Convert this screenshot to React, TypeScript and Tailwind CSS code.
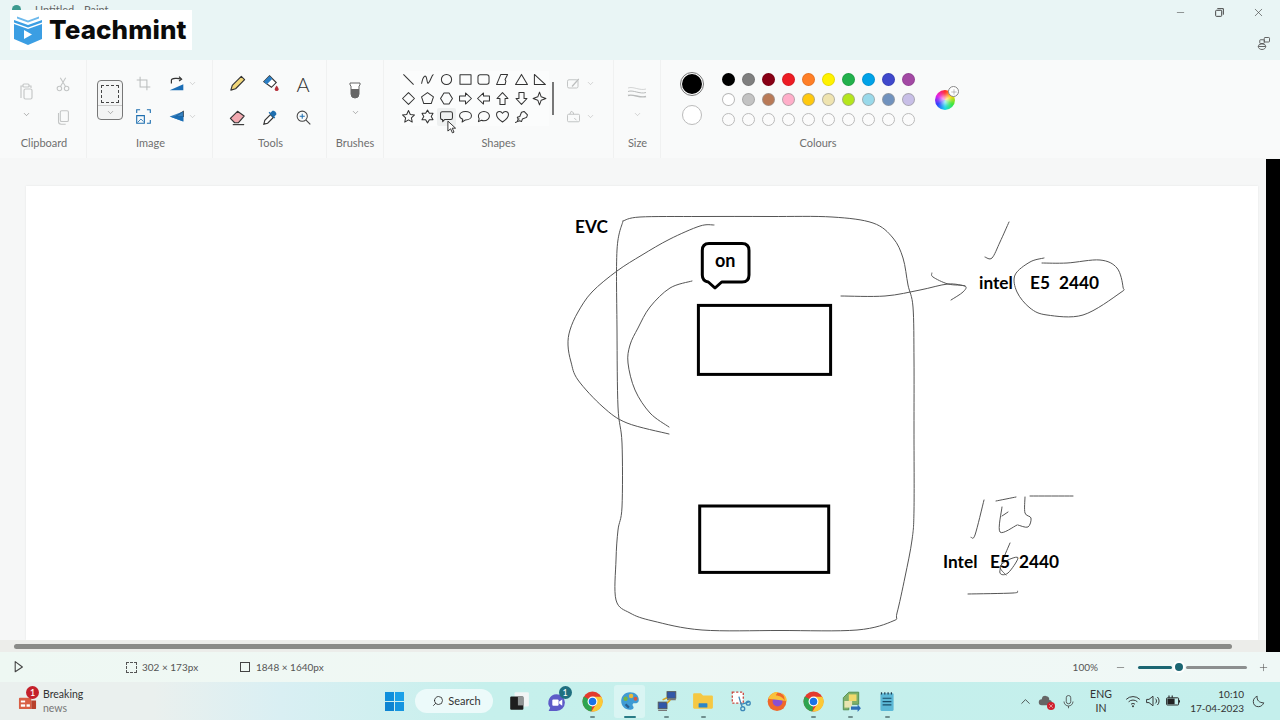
import { ChevronDown, ChevronUp, Minus, Plus, Search, X } from 'lucide-react';
import type { ReactNode } from 'react';

type Pt = [number, number];

// Catmull-Rom through the sampled points, so pen strokes don't look like polylines
function smooth(pts: Pt[]) {
  let d = `M${pts[0][0]} ${pts[0][1]}`;
  for (let i = 0; i < pts.length - 1; i++) {
    const p0 = pts[i - 1] || pts[i];
    const p1 = pts[i];
    const p2 = pts[i + 1];
    const p3 = pts[i + 2] || p2;
    const c1x = p1[0] + (p2[0] - p0[0]) / 6;
    const c1y = p1[1] + (p2[1] - p0[1]) / 6;
    const c2x = p2[0] - (p3[0] - p1[0]) / 6;
    const c2y = p2[1] - (p3[1] - p1[1]) / 6;
    d += ` C${c1x} ${c1y} ${c2x} ${c2y} ${p2[0]} ${p2[1]}`;
  }
  return d;
}

const penStrokes: Pt[][] = [
  // EVC outline
  [[623, 221], [640, 217], [700, 216.500], [770, 216.500], [832, 217], [873, 223], [893, 238], [903, 258], [908, 285], [913, 307], [914, 360], [914, 430], [914, 510], [912, 540], [905, 577], [897, 613], [893, 621], [857, 630], [780, 630.500], [702, 630], [653, 621], [630, 613], [616, 600], [616, 560], [618, 530], [622, 507], [622, 443], [618, 407], [617, 330], [617, 250], [623, 221]],
  // arcs
  [[714, 225], [700, 226], [670, 239], [642, 255], [617, 271], [592, 292], [578, 312], [570, 330], [568, 345], [571, 362], [578, 380], [603, 407], [627, 423], [669, 434]],
  [[692, 281], [670, 288], [650, 307], [638, 328], [630, 345], [628, 363], [635, 390], [650, 413], [669, 427]],
  // arrow
  [[841, 296], [885, 296], [920, 290], [948, 284], [965, 286]],
  [[932, 273], [933, 277], [948, 284], [965, 286], [963, 292], [951, 300]],
  // top right tick
  [[1009, 222], [1000, 242], [992, 258], [985, 257]],
  // ellipse round E5 2440
  [[1042, 263], [1067, 263], [1100, 260], [1117, 268], [1123, 287], [1120, 293], [1083, 315], [1047, 315], [1030, 308], [1017, 292], [1015, 275], [1030, 262], [1044, 258]],
  // bottom right scribbles
  [[984, 500], [975, 535], [971, 537]],
  [[996, 501], [1016, 497]],
  [[1002, 507], [1000, 532], [1017, 525]],
  [[1002, 516], [1008, 512]],
  [[1030, 496], [1073, 496]],
  [[1025, 497], [1025, 513], [1031, 518], [1028, 527], [1018, 525]],
  [[1010, 543], [1003, 560], [1000, 573], [1008, 573], [1018, 558], [1008, 560], [1000, 567], [1006, 575]],
  [[968, 594], [1013, 593], [1017, 591]],
];

function Drawing() {
  return (
    <svg viewBox="26 186 1232 454" className="h-[454px] w-[1232px]" fill="none">
      {penStrokes.map((pts, i) => (
        <path key={i} d={smooth(pts)} stroke="#555" strokeWidth="1" strokeLinecap="round" />
      ))}
      <rect x="698.400" y="305.400" width="132.200" height="69" stroke="#000" strokeWidth="3" />
      <rect x="699.700" y="506" width="129" height="66.400" stroke="#000" strokeWidth="3" />
      <path
        d="M709 243.600H742Q749 243.600 749 250.600V275Q749 282 742 282H721.700L715 288L708.300 282Q702.300 281 702.300 275V250.600Q702.300 243.600 709 243.600Z"
        stroke="#000"
        strokeWidth="3"
        strokeLinejoin="round"
      />
      <g fill="#000" fontFamily="Lato, sans-serif" fontWeight="700" fontSize="17.250">
        <text x="715" y="266.500" fontSize="18">on</text>
        <text x="575" y="233">EVC</text>
        <text x="979" y="289">intel</text>
        <text x="1030" y="289">E5</text>
        <text x="1059" y="289">2440</text>
        <text x="943" y="568">Intel</text>
        <text x="990" y="568">E5</text>
        <text x="1019" y="568">2440</text>
      </g>
    </svg>
  );
}

function Ico({ children, size = 20, className = '' }: { children: ReactNode; size?: number; className?: string }) {
  return (
    <svg viewBox="0 0 20 20" width={size} height={size} fill="none" className={className}>
      {children}
    </svg>
  );
}

function Chev({ muted }: { muted?: boolean }) {
  return <ChevronDown size={9} strokeWidth={1.5} className={muted ? 'text-[#b5b5b5]' : 'text-[#777]'} />;
}

function Group({ label, width, labelPad = '', children }: { label: string; width: string; labelPad?: string; children: ReactNode }) {
  return (
    <div className={`flex shrink-0 flex-col border-r border-[#f0f1f1] ${width}`}>
      <div className="flex h-[75px] pt-[7px]">{children}</div>
      <div className={`h-4 text-center text-[11px] leading-4 text-[#6f6f6f] ${labelPad}`}>{label}</div>
    </div>
  );
}

function Cell({ children }: { children: ReactNode }) {
  return <div className="flex h-[33px] w-6 items-center justify-center">{children}</div>;
}

const shapeIcons: ReactNode[] = [
  <path d="M4 4l12 12" />,
  <path d="M3 15C5 5 8 4 9 9s1 7 3 4 3-8 5-9" />,
  <circle cx="10" cy="10" r="6" />,
  <rect x="3.500" y="4.500" width="13" height="11" />,
  <rect x="3.500" y="4.500" width="13" height="11" rx="2.500" />,
  <path d="M8 4h8l-3 6 1 2-1 4H3z" />,
  <path d="M10 4l7 12H3z" />,
  <path d="M4 4l13 12H4z" />,
  <path d="M10 3l7 7-7 7-7-7z" />,
  <path d="M10 3l7 5-2.600 8H5.600L3 8z" />,
  <path d="M7 3.500h6l4 6.500-4 6.500H7l-4-6.500z" />,
  <path d="M3 7h7V3.500l7 6.500-7 6.500V13H3z" />,
  <path d="M17 7h-7V3.500L3 10l7 6.500V13h7z" />,
  <path d="M7 17v-7H3.500L10 3l6.500 7H13v7z" />,
  <path d="M7 3v7H3.500l6.500 7 6.500-7H13V3z" />,
  <path d="M10 2.500l2 5.500 5.500 2-5.500 2-2 5.500-2-5.500-5.500-2 5.500-2z" />,
  <path d="M10 3l2.100 4.600 5 .6-3.700 3.400 1 5L10 14l-4.400 2.600 1-5L2.900 8.200l5-.6z" />,
  <path d="M10 2.500l2.200 3.800h4.300L14.400 10l2.100 3.700h-4.300L10 17.500l-2.200-3.800H3.500L5.600 10 3.500 6.300h4.300z" />,
  <path d="M5 4.500h10q2 0 2 2v5q0 2-2 2H8l-2.500 2.500v-2.500H5q-2 0-2-2v-5q0-2 2-2z" />,
  <path d="M10 4c4 0 7 2.200 7 5s-3 5-7 5l-4 2.500.8-3.300C4.400 12.300 3 10.800 3 9c0-2.800 3-5 7-5z" />,
  <path d="M10.500 4c3.600 0 6.500 2.500 6.500 5.500S14.100 15 10.500 15c-1 0-2-.2-2.800-.6L4 16l.9-3.300A5.500 5.500 0 0 1 4 9.500C4 6.500 6.900 4 10.500 4z" />,
  <path d="M10 16.500C5 13 3 10.500 3 7.800 3 5.500 4.700 4 6.500 4c1.500 0 2.800.9 3.500 2.300C10.700 4.900 12 4 13.500 4 15.300 4 17 5.500 17 7.800c0 2.700-2 5.200-7 8.700z" />,
  <path d="M3 17l2-1 1-3-1-2 3-1 2-5 3-1 4 4-1 3-5 2-1 3-2-1-3 1zM7.500 12.500l-1 1" />,
];

const paletteTop = ['#000000', '#7f7f7f', '#880015', '#ed1c24', '#ff7f27', '#fff200', '#22b14c', '#00a2e8', '#3f48cc', '#a349a4'];
const paletteMid = ['#ffffff', '#c3c3c3', '#b97a57', '#ffaec9', '#ffc90e', '#efe4b0', '#b5e61d', '#99d9ea', '#7092be', '#c8bfe7'];

function Ribbon() {
  return (
    <div className="flex h-[98px] shrink-0 bg-[#f9fafa]">
      <Group label="Clipboard" width="w-[87px]" labelPad="pl-[2px]">
        <div className="ml-[14px] flex w-6 flex-col items-center pt-[14px]">
          <Ico size={20}>
            <g stroke="#c6c8c8" strokeWidth="1.200">
              <path d="M5 17V5h2M13 5h2v2" />
              <rect x="7" y="3" width="6" height="3" rx="1" />
              <rect x="8" y="8" width="8" height="10" rx="1.500" />
            </g>
          </Ico>
          <div className="mt-[9px]"><Chev /></div>
        </div>
        <div className="ml-[13px] flex w-6 flex-col">
          <Cell>
            <Ico size={18}>
              <g stroke="#c3c5c5" strokeWidth="1.200">
                <circle cx="6" cy="15" r="2.500" />
                <circle cx="14" cy="15" r="2.500" />
                <path d="M7 13L13 3M13 13L7 3" />
              </g>
            </Ico>
          </Cell>
          <Cell>
            <Ico size={18}>
              <g stroke="#c3c5c5" strokeWidth="1.200">
                <rect x="7" y="3" width="9" height="12" rx="1.500" />
                <path d="M5 5.500V15a3 3 0 0 0 3 3h5" />
              </g>
            </Ico>
          </Cell>
        </div>
      </Group>

      <Group label="Image" width="w-[126px]" labelPad="pl-[2px]">
        <div className="ml-[10px] flex h-[66px] items-center">
          <div className="flex h-10 w-[26px] flex-col items-center rounded-[4px] border border-[#777] bg-[#f3f4f4]">
            <div className="mt-[4px] h-[18px] w-[18px] border border-dashed border-[#444]" />
            <div className="mt-[2px] h-px w-full bg-[#ccc]" />
            <div className="mt-[2px]"><Chev /></div>
          </div>
        </div>
        <div className="ml-2 flex w-6 flex-col">
          <Cell>
            <Ico size={17}>
              <path d="M6 2v12h12M2 6h12v12" stroke="#b9bcbc" strokeWidth="1.200" />
            </Ico>
          </Cell>
          <Cell>
            <Ico size={17}>
              <path d="M2 6V2h4M14 2h4v4M18 14v4h-4M2 9v9h9V9z" stroke="#1f6fb0" strokeWidth="1.300" />
              <path d="M3 17l4-4 3 3" stroke="#1f6fb0" strokeWidth="1" />
            </Ico>
          </Cell>
        </div>
        <div className="ml-[9px] flex flex-col">
          <div className="flex h-[33px] items-center">
            <Ico size={17} className="ml-1">
              <path d="M2 18l16-7v7z" fill="#1a6db5" />
              <path d="M4 10V6c0-2 8-3 11-1" stroke="#333" strokeWidth="1.400" />
              <path d="M13 2l3 3-3 2" stroke="#333" strokeWidth="1.400" />
            </Ico>
            <span className="ml-[3px]"><Chev muted /></span>
          </div>
          <div className="flex h-[33px] items-center">
            <Ico size={17} className="ml-1">
              <path d="M9 10L18 4v6z" fill="none" stroke="#333" strokeWidth="1.200" />
              <path d="M18 10v6l-16-6z" fill="#1a6db5" />
              <path d="M2 10l16-6v12z" fill="#1a6db5" opacity=".85" />
            </Ico>
            <span className="ml-[3px]"><Chev muted /></span>
          </div>
        </div>
      </Group>

      <Group label="Tools" width="w-[114px]" labelPad="pl-[2px]">
        <div className="ml-3 grid grid-cols-[24px_24px_24px] gap-x-[9px]">
          <Cell>
            <Ico size={19}>
              <path d="M3 17l1.500-5L14 2.500l3.500 3.500L8 15.500z" fill="#f2d77a" stroke="#333" strokeWidth="1.200" strokeLinejoin="round" />
            </Ico>
          </Cell>
          <Cell>
            <Ico size={19}>
              <path d="M3 8l6-6 7 7-5 5z" fill="#fff" stroke="#333" strokeWidth="1.200" />
              <path d="M3 8l6-6 3 3-6 6z" fill="#2b7ec4" />
              <path d="M16.500 12c1.500 2 2 3 2 4a2 2 0 0 1-4 0c0-1 .5-2 2-4z" fill="#b5303a" />
            </Ico>
          </Cell>
          <Cell>
            <span className="text-[20px] font-light leading-none text-[#333]">A</span>
          </Cell>
          <Cell>
            <Ico size={19}>
              <path d="M2.500 11L10 3.500l7 5-6 7H7z" fill="#f2a9b0" stroke="#333" strokeWidth="1.200" strokeLinejoin="round" />
              <path d="M5 17.500h12" stroke="#333" strokeWidth="1.200" />
            </Ico>
          </Cell>
          <Cell>
            <Ico size={19}>
              <path d="M3 17l1-4 6-6 3 3-6 6z" fill="#fff" stroke="#333" strokeWidth="1.200" />
              <path d="M10 5l2-2c2-1 5 2 4 4l-2 2 1 1-1 1-6-6 1-1z" fill="#1f6fb0" />
            </Ico>
          </Cell>
          <Cell>
            <Ico size={17}>
              <circle cx="8.500" cy="8.500" r="6" stroke="#444" strokeWidth="1.200" />
              <path d="M13 13l5 5" stroke="#444" strokeWidth="1.400" />
              <path d="M8.500 5.500v6M5.500 8.500h6" stroke="#1f6fb0" strokeWidth="1.200" />
            </Ico>
          </Cell>
        </div>
      </Group>

      <Group label="Brushes" width="w-[57px]">
        <div className="flex w-full flex-col items-center pt-[14px]">
          <Ico size={20}>
            <path d="M5 2h10v2l-1 1v8a4 4 0 0 1-8 0V5L5 4z" fill="#fff" stroke="#666" strokeWidth="1" />
            <path d="M6 8h8v5a4 4 0 0 1-8 0z" fill="#666" />
          </Ico>
          <div className="mt-[7px]"><Chev /></div>
        </div>
      </Group>

      <Group label="Shapes" width="w-[230px]">
        <div className="relative ml-[15.600px] mt-[3.600px] grid h-fit grid-cols-[repeat(8,18.700px)] auto-rows-[18.500px] bg-[#fbfcfc]">
          {shapeIcons.map((shape, i) => (
            <div key={i} className={`flex items-center justify-center ${i === 18 ? 'rounded-[2px] bg-[#eef0f0]' : ''}`}>
              <Ico size={17}>
                <g stroke="#333" strokeWidth="1.200" strokeLinejoin="round">{shape}</g>
              </Ico>
            </div>
          ))}
          {/* Mouse pointer over the gallery */}
          <svg viewBox="0 0 10 15" width="9" height="14" className="absolute left-[47px] top-[49px]">
            <path d="M1 1v11l3-2.500 2 4.500 1.800-.8-2-4.400h3.700z" fill="#fff" stroke="#222" strokeWidth="1" strokeLinejoin="round" />
          </svg>
        </div>
        <div className="ml-[3px] mt-[15px] h-[33px] w-[2px] bg-[#777]" />
        <div className="ml-[12px] flex flex-col">
          <div className="flex h-[33px] items-center">
            <Ico size={15}>
              <rect x="2" y="5" width="14" height="11" rx="2" stroke="#bcbebe" strokeWidth="1.200" />
              <path d="M8 14l9-10" stroke="#bcbebe" strokeWidth="1.600" />
            </Ico>
            <span className="ml-[5px]"><Chev muted /></span>
          </div>
          <div className="flex h-[33px] items-center">
            <Ico size={15}>
              <rect x="2" y="7" width="16" height="10" rx="1.500" stroke="#bcbebe" strokeWidth="1.200" />
              <path d="M5 7l2-4 3 2v2M11 12l3 3" stroke="#bcbebe" strokeWidth="1.200" />
            </Ico>
            <span className="ml-[5px]"><Chev muted /></span>
          </div>
        </div>
      </Group>

      <Group label="Size" width="w-[47px]" labelPad="pl-[1px]">
        <div className="flex w-full flex-col items-center pt-[16px]">
          <Ico size={20}>
            <g stroke="#b9bbbb" fill="none">
              <path d="M1 5c5-2 12 3 18 1" strokeWidth=".6" />
              <path d="M1 8.500c5-2 12 3 18 1" strokeWidth="1" />
              <path d="M1 12.500c5-2 12 3 18 1" strokeWidth="1.400" />
            </g>
          </Ico>
          <div className="mt-[7px]"><Chev muted /></div>
        </div>
      </Group>

      <Group label="Colours" width="w-[314px] border-r-0">
        <div className="ml-[19px] flex w-6 flex-col items-center">
          <div className="flex h-[33px] items-center">
            <div className="flex h-[24px] w-[24px] items-center justify-center rounded-full border border-[#777] bg-white">
              <div className="h-[20px] w-[20px] rounded-full bg-black" />
            </div>
          </div>
          <div className="flex h-[29px] items-center">
            <div className="h-[20px] w-[20px] rounded-full border border-[#bbb] bg-white" />
          </div>
        </div>
        <div className="ml-[14px] mt-[2px] grid h-fit grid-cols-[repeat(10,20px)] auto-rows-[20px]">
          {paletteTop.map((c) => (
            <div key={c} className="flex items-center justify-center">
              <div className="h-[13px] w-[13px] rounded-full border border-black/10" style={{ backgroundColor: c }} />
            </div>
          ))}
          {paletteMid.map((c) => (
            <div key={c} className="flex items-center justify-center">
              <div className="h-[13px] w-[13px] rounded-full border border-[#999]/70" style={{ backgroundColor: c }} />
            </div>
          ))}
          {paletteMid.map((c) => (
            <div key={c} className="flex items-center justify-center">
              <div className="h-[13px] w-[13px] rounded-full border border-[#bbb] bg-[#fbfbfb]" />
            </div>
          ))}
        </div>
        <div className="relative ml-[17px] mt-[23px] h-5 w-5 rounded-full bg-[conic-gradient(#ff2a2a,#ffd800,#39e639,#19d8e8,#2a3cff,#e61ee6,#ff2a2a)]">
          <div className="absolute inset-[5px] rounded-full bg-white/70 blur-[2px]" />
          <div className="absolute -right-[4px] -top-[4px] flex h-[11px] w-[11px] items-center justify-center rounded-full border border-[#888] bg-white">
            <Plus size={8} strokeWidth={1.200} className="text-[#666]" />
          </div>
        </div>
      </Group>
    </div>
  );
}

function StatusBar() {
  return (
    <div className="flex h-[30px] shrink-0 items-center bg-[linear-gradient(90deg,#eef8f3,#f1f8f5_50%,#eff8f6)] text-[10px] text-[#555]">
      <div className="ml-[14px] w-[112px]">
        <Ico size={12}>
          <path d="M2 1v17l12-8z" stroke="#444" strokeWidth="1.800" strokeLinejoin="round" />
        </Ico>
      </div>
      <div className="h-[11px] w-[11px] border border-dashed border-[#555]" />
      <span className="ml-[5px] w-[98px]">302 × 173px</span>
      <div className="h-[10px] w-[10px] border border-[#444]" />
      <span className="ml-[6px]">1848 × 1640px</span>
      <span className="ml-auto">100%</span>
      <Minus size={11} strokeWidth={1.300} className="ml-[17px] text-[#555]" />
      <div className="ml-[12px] flex w-[109px] items-center">
        <div className="h-[3px] w-[34px] rounded-full bg-[#1b6672]" />
        <div className="mx-[1px] h-[12px] w-[12px] rounded-full border-[2px] border-white bg-[#1b6672]" />
        <div className="h-[3px] flex-1 rounded-full bg-[#8c8f8f]" />
      </div>
      <Plus size={11} strokeWidth={1.300} className="ml-[11px] mr-[11px] text-[#555]" />
    </div>
  );
}

function Chrome() {
  return (
    <Ico size={21}>
      <circle cx="10" cy="10" r="9.500" fill="#e33b2e" />
      <path d="M10 10L1.800 5.200A9.500 9.500 0 0 0 9 19.500z" fill="#2ea44f" />
      <path d="M10 5.500h8.500A9.500 9.500 0 0 1 9 19.500L13.800 12z" fill="#fcc934" />
      <circle cx="10" cy="10" r="4.700" fill="#fff" />
      <circle cx="10" cy="10" r="3.600" fill="#1a73e8" />
    </Ico>
  );
}

const taskIcons: { key: string; active?: boolean; dash?: boolean; icon: ReactNode }[] = [
  {
    key: 'taskview',
    icon: (
      <Ico size={22}>
        <rect x="6" y="2" width="13" height="13" rx="1" fill="#f1f5f5" />
        <rect x="2" y="6" width="12" height="12" rx="1" fill="#1e1e1e" />
        <rect x="9" y="6" width="5" height="8" fill="#8f9494" />
      </Ico>
    ),
  },
  {
    key: 'chat',
    icon: (
      <div className="relative">
        <Ico size={21}>
          <path d="M10 3a8 8 0 0 1 0 16H2.500l1.500-3A8 8 0 0 1 10 3z" fill="#5d5bc8" />
          <rect x="6" y="8" width="6" height="6" rx="1" fill="#fff" />
          <path d="M12.500 10l3-2v6l-3-2z" fill="#fff" />
        </Ico>
        <div className="absolute -right-[5px] -top-[5px] flex h-[13px] w-[13px] items-center justify-center rounded-full bg-[#1f6f80] text-[9px] leading-none text-white">
          1
        </div>
      </div>
    ),
  },
  { key: 'chrome', dash: true, icon: <Chrome /> },
  {
    key: 'paint',
    active: true,
    dash: true,
    icon: (
      <Ico size={22}>
        <path d="M10 2c5 0 8 3 8 7 0 3-3 3-4 3-2 0-2 2-1 3 1 2-1 3-3 3-5 0-8-4-8-8s3-8 8-8z" fill="#3f9bd4" />
        <circle cx="6" cy="8" r="2" fill="#74b544" />
        <circle cx="11" cy="5.500" r="2" fill="#e9b93a" />
        <circle cx="15" cy="8" r="1.800" fill="#d8583f" />
        <path d="M6 13l3 3" stroke="#2a5f8f" strokeWidth="2" />
      </Ico>
    ),
  },
  {
    key: 'network',
    dash: true,
    icon: (
      <Ico size={22}>
        <rect x="10" y="1.500" width="8" height="6" fill="#3157a8" stroke="#555" strokeWidth=".8" />
        <rect x="2" y="11" width="8" height="6" fill="#3157a8" stroke="#555" strokeWidth=".8" />
        <path d="M2 18.500h8M10 8.800h8" stroke="#777" strokeWidth="1.200" />
        <path d="M6 9l4-2M10 12l3-3" stroke="#d8a520" strokeWidth="1.400" />
      </Ico>
    ),
  },
  {
    key: 'folder',
    dash: true,
    icon: (
      <Ico size={22}>
        <path d="M1 4a1 1 0 0 1 1-1h6l2 2h8a1 1 0 0 1 1 1v10a1 1 0 0 1-1 1H2a1 1 0 0 1-1-1z" fill="#f5c843" />
        <rect x="6" y="12" width="8" height="4" rx=".5" fill="#2a86c8" />
      </Ico>
    ),
  },
  {
    key: 'snip',
    icon: (
      <Ico size={22}>
        <rect x="3" y="2" width="10" height="10" fill="#fff" stroke="#c9483f" strokeDasharray="2 1.500" strokeWidth="1.200" />
        <path d="M9 6l2 7 1 2M18 11l-7 2" stroke="#3d89b8" strokeWidth="1.200" />
        <circle cx="12.500" cy="17" r="1.800" stroke="#3d89b8" strokeWidth="1.200" />
        <circle cx="17.500" cy="12" r="1.800" stroke="#3d89b8" strokeWidth="1.200" />
      </Ico>
    ),
  },
  {
    key: 'firefox',
    icon: (
      <Ico size={22}>
        <circle cx="10" cy="10.500" r="8.500" fill="#f0682a" />
        <circle cx="10.500" cy="10.500" r="4.500" fill="#8a4fd0" />
        <path d="M2 8c2-5 6-7 9-6-1 1-2 2-2 3 3 0 7 2 8 5 0-5-2-7-4-8 3 1 6 4 6 8" fill="#f9c13b" />
      </Ico>
    ),
  },
  { key: 'chrome2', dash: true, icon: <Chrome /> },
  {
    key: 'vm',
    dash: true,
    icon: (
      <Ico size={22}>
        <path d="M3 7l5-5h9v11H8v5H3z" fill="#7fb069" stroke="#4f8a4a" strokeWidth=".8" />
        <rect x="8" y="4" width="7" height="6" fill="#f2d96c" />
        <rect x="4" y="10" width="7" height="6" fill="#e8e4b0" />
        <path d="M10 15h6v-2l3 3.500-3 3.500v-2h-6z" fill="#2e6fb5" />
      </Ico>
    ),
  },
  {
    key: 'notepad',
    dash: true,
    icon: (
      <Ico size={22}>
        <rect x="4" y="3" width="12" height="16" rx="1" fill="#5cb8d6" />
        <path d="M6 7.500h8M6 10.500h8M6 13.500h8" stroke="#184d68" strokeWidth="1.100" />
        <path d="M5 2v2M8 2v2M11 2v2M14 2v2" stroke="#1f3e50" strokeWidth="1.100" />
      </Ico>
    ),
  },
];

function Taskbar() {
  return (
    <div className="flex h-[38px] shrink-0 items-center bg-[linear-gradient(90deg,#eaf0ee,#eaf0ee_12%,#d9eff3_22%,#c6f0ec_38%,#c4efec_100%)]">
      {/* News widget */}
      <div className="flex w-[381px] items-center pl-[18px]">
        <div className="relative">
          <Ico size={19}>
            <path d="M1 7a1 1 0 0 1 1-1h12v12H2a1 1 0 0 1-1-1z" fill="#d95f45" />
            <path d="M14 9h5v8a1 1 0 0 1-1 1h-4z" fill="#b8412c" />
            <rect x="3" y="9" width="4.500" height="2" fill="#fff" />
            <rect x="3" y="13" width="4.500" height="2.500" fill="#fff" />
            <rect x="9" y="13" width="3.500" height="2.500" fill="#fff" />
          </Ico>
          <div className="absolute -top-[6px] left-[8px] flex h-[13px] w-[13px] items-center justify-center rounded-full bg-[#c4202b] text-[9px] font-semibold leading-none text-white">
            1
          </div>
        </div>
        <div className="ml-[6px] flex flex-col text-[10.500px] leading-[14px]">
          <span className="text-[#333]">Breaking</span>
          <span className="text-[#777]">news</span>
        </div>
      </div>

      <div className="flex w-[26px] justify-center">
        <div className="grid h-[19px] w-[19px] grid-cols-2 gap-[1px]">
          <div className="bg-[#0f8fdc]" />
          <div className="bg-[#1ba1e8]" />
          <div className="bg-[#0d84d2]" />
          <div className="bg-[#1595e0]" />
        </div>
      </div>
      <div className="ml-2 flex h-[24px] w-[78px] items-center justify-center gap-[4px] rounded-full bg-[#ecfafa] pl-[5px] text-[11px] text-[#333]">
        <Search size={12} strokeWidth={1.600} className="-scale-x-100 text-[#222]" />
        Search
      </div>

      <div className="ml-[8px] flex">
        {taskIcons.map((t) => (
          <div key={t.key} className="relative flex h-[33px] w-[36.800px] items-center justify-center">
            {t.active && <div className="absolute inset-x-[3px] inset-y-0 rounded-[3px] bg-[#d9f5f3]" />}
            <div className="relative">{t.icon}</div>
            {t.dash && (
              <div
                className={`absolute bottom-0 h-[2px] rounded-full ${t.active ? 'w-3 bg-[#2a7c87]' : 'w-[5px] bg-[#6f8f8f]'}`}
              />
            )}
          </div>
        ))}
      </div>

      {/* System tray */}
      <div className="ml-auto flex items-center whitespace-nowrap text-[11px] text-[#333]">
        <ChevronUp size={15} strokeWidth={1.300} className="text-[#333]" />
        <div className="relative ml-[5px]">
          <Ico size={15}>
            <path d="M5 15a4 4 0 0 1 0-8 5 5 0 0 1 10 1 3.500 3.500 0 0 1 0 7z" fill="#666" />
          </Ico>
          <div className="absolute -bottom-[1px] -right-[2px] flex h-[8px] w-[8px] items-center justify-center rounded-full bg-[#d0212e]">
            <X size={6} strokeWidth={2} className="text-white" />
          </div>
        </div>
        <div className="ml-[8px]">
          <Ico size={15}>
            <rect x="7" y="2" width="6" height="11" rx="3" stroke="#444" strokeWidth="1.100" />
            <path d="M4 10a6 6 0 0 0 12 0M10 16v3" stroke="#444" strokeWidth="1.100" />
          </Ico>
        </div>
        <div className="ml-[13px] w-6 text-center text-[10.500px] leading-[14px]">
          ENG
          <br />
          IN
        </div>
        <div className="ml-[12px]">
          <Ico size={16}>
            <path d="M1.500 8a12 12 0 0 1 17 0M4.500 11a8 8 0 0 1 11 0M7.500 14a4 4 0 0 1 5 0" stroke="#333" strokeWidth="1.200" />
            <circle cx="10" cy="16.500" r="1.200" fill="#333" />
          </Ico>
        </div>
        <div className="ml-[4px]">
          <Ico size={16}>
            <path d="M2 8h3l5-4v12l-5-4H2z" stroke="#333" strokeWidth="1.200" strokeLinejoin="round" />
            <path d="M13 7a4 4 0 0 1 0 6M15.500 5a7 7 0 0 1 0 10" stroke="#333" strokeWidth="1.200" />
          </Ico>
        </div>
        <div className="ml-[4px]">
          <Ico size={16}>
            <rect x="2" y="6" width="15" height="9" rx="1" stroke="#222" strokeWidth="1.200" />
            <rect x="3" y="7" width="9" height="7" fill="#222" />
            <path d="M18 9v3M5 6V3M9 6V3" stroke="#222" strokeWidth="1.400" />
          </Ico>
        </div>
        <div className="ml-[10px] flex w-[53px] flex-col items-end text-[10px] leading-[14px]">
          <span>10:10</span>
          <span>17-04-2023</span>
        </div>
        <div className="ml-[8px] mr-[15px]">
          <Ico size={13}>
            <path d="M8 2c-1 6 3 10 10 10-1 3-4 6-8 6-5 0-8-3-8-8 0-4 3-7 6-8z" stroke="#333" strokeWidth="1.400" />
          </Ico>
        </div>
      </div>
    </div>
  );
}

export default function App() {
  return (
    <div className="flex h-[720px] w-[1280px] flex-col overflow-hidden bg-[#f6f7f7] font-['Lato',sans-serif]">
      {/* Title bar */}
      <div className="relative flex h-[60px] shrink-0 bg-[#e9f5f5]">
        <div className="ml-[12px] mt-[5px] h-[9px] w-[9px] rounded-full bg-[#3c9a8f]" />
        <span className="ml-[14px] mt-[3px] text-[11px] leading-[14px] text-[#666]">Untitled - Paint</span>
        <div className="ml-auto flex h-6 items-center pr-[15px] text-[#444]">
          <Minus size={11} strokeWidth={1.200} />
          <div className="ml-[28px]">
            <Ico size={11}>
              <rect x="3" y="6" width="11" height="11" rx="1.500" stroke="#444" strokeWidth="1.800" />
              <path d="M6 3h11v11" stroke="#444" strokeWidth="1.800" />
            </Ico>
          </div>
          <X size={13} strokeWidth={1.200} className="ml-[27px]" />
        </div>
        <div className="absolute right-[9px] top-[36px]">
          <Ico size={15}>
            <rect x="11" y="2" width="7" height="6" rx="1" stroke="#555" strokeWidth="1.200" />
            <rect x="5" y="5" width="6" height="5" rx="1" stroke="#555" strokeWidth="1.200" />
            <path d="M3 14a5 3.500 0 0 1 10 0c0 2-2 4-5 4s-5-2-5-4zM3 14h10" stroke="#555" strokeWidth="1.200" />
          </Ico>
        </div>

        {/* Watermark over the title */}
        <div className="absolute left-[10px] top-[10px] flex h-10 w-[182px] items-center bg-white pl-[3px]">
          <svg viewBox="0 0 30 30" width="30" height="30">
            <path d="M1 9l14 5 14-5v15l-14 6-14-6z" fill="#3b9ee3" />
            <path d="M1 5l14 5v2.500L1 7.500zM29 5L15 10v2.500l14-5z" fill="#3b9ee3" />
            <path d="M4 1.500l11 4 11-4v2L15 7.500 4 3.500z" fill="#6db9ec" />
            <path d="M11 15l8 4.500-8 4.500z" fill="#fff" />
          </svg>
          <span className="ml-[6px] font-['Inter',sans-serif] text-[26px] font-extrabold leading-none tracking-[0.1px] text-[#0b0b0b]">
            Teachmint
          </span>
        </div>
      </div>

      <Ribbon />

      {/* Canvas area */}
      <div className="flex min-h-0 flex-1">
        <div className="flex min-w-0 flex-1 flex-col">
          <div className="flex-1 overflow-hidden pl-[26px] pt-[28px]">
            <div className="h-[454px] w-[1232px] bg-white shadow-[0_0_2px_rgba(0,0,0,0.08)]">
              <Drawing />
            </div>
          </div>
          <div className="flex h-3 shrink-0 items-center bg-[#ecedea] pl-[14px]">
            <div className="h-[5px] w-[1218px] rounded-full bg-[#8a8b88]" />
          </div>
        </div>
        <div className="mt-px w-[14px] shrink-0 bg-black" />
      </div>

      <StatusBar />
      <Taskbar />
    </div>
  );
}
